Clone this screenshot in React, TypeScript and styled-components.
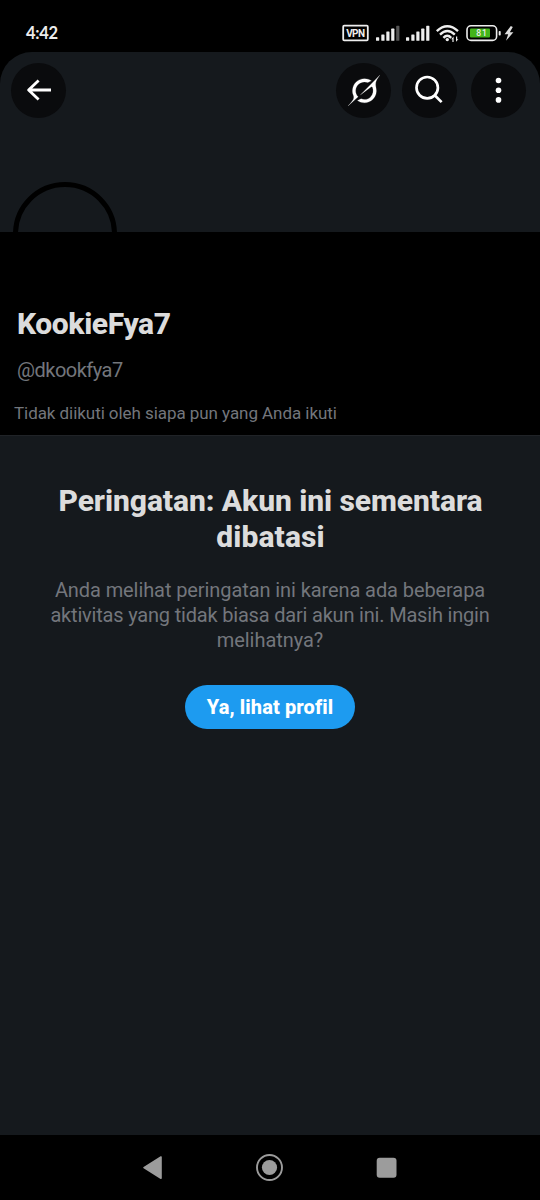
import React from "react";
import styled, { createGlobalStyle } from "styled-components";

const GlobalStyle = createGlobalStyle`
  * { box-sizing: border-box; }
  body { margin: 0; background: #000; }
`;

const Screen = styled.div`
  display: flex;
  flex-direction: column;
  width: 540px;
  height: 1200px;
  overflow: hidden;
  background: #000;
  font-family: Roboto, "Liberation Sans", sans-serif;
`;

const StatusBar = styled.header`
  display: flex;
  justify-content: space-between;
  height: 52px;
  padding-left: 26px;
`;

const Clock = styled.time`
  padding-top: 23px;
  font: 700 16.5px/21px Lato, sans-serif;
  letter-spacing: -0.3px;
  color: #ececec;
`;

const Banner = styled.section`
  display: flex;
  flex-direction: column;
  justify-content: space-between;
  height: 180px;
  overflow: hidden;
  border-radius: 32px 32px 0 0;
  background: #15191d;
`;

const Toolbar = styled.nav`
  display: flex;
  padding: 10.5px 14px 0 11px;
`;

const RoundButton = styled.button<{ $before?: string }>`
  display: flex;
  align-items: center;
  justify-content: center;
  width: 55px;
  height: 55px;
  padding: 0;
  border: 0;
  border-radius: 50%;
  margin-left: ${(p) => p.$before ?? "0"};
  background: #0a0b0d;
`;

const AvatarWindow = styled.div`
  height: 50px;
  padding-left: 13px;
  overflow: hidden;
`;

const Avatar = styled.div`
  width: 104px;
  height: 104px;
  border: 5px solid #000;
  border-radius: 50%;
`;

const Profile = styled.section`
  height: 204px;
  padding: 74px 14px 0;
  border-bottom: 1px solid #202327;
  white-space: nowrap;
`;

const Name = styled.h1`
  margin: 0 0 0 3px;
  font-size: 30px;
  line-height: 36px;
  font-weight: 800;
  letter-spacing: -0.4px;
  color: #dcdcdc;
`;

const Handle = styled.p`
  margin: 16px 0 0 3px;
  font-size: 20px;
  line-height: 25px;
  letter-spacing: -0.5px;
  color: #73767c;
`;

const Followers = styled.p`
  margin: 19px 0 0;
  font-size: 17px;
  line-height: 22px;
  letter-spacing: -0.06px;
  color: #73767c;
`;

const Warning = styled.main`
  display: flex;
  flex-direction: column;
  align-items: center;
  height: 699px;
  padding-top: 47px;
  background: #15191d;
  text-align: center;
  white-space: nowrap;
`;

const Title = styled.h2`
  margin: 0;
  padding-left: 1px;
  font-size: 30px;
  line-height: 36px;
  font-weight: 800;
  color: #dcdcdc;
`;

const Message = styled.p`
  margin: 23px 0 0;
  font-size: 20px;
  line-height: 25px;
  color: #73767c;
`;

const Line = styled.span<{ $track: number }>`
  display: block;
  letter-spacing: ${(p) => p.$track}px;
`;

const ViewButton = styled.button`
  width: 170px;
  height: 44px;
  margin-top: 31.5px;
  padding: 0;
  border: 0;
  border-radius: 22px;
  background: #1d9bf0;
  font: 800 20px/44px Roboto, sans-serif;
  letter-spacing: 0.1px;
  color: #fff;
`;

const SystemNav = styled.footer`
  display: flex;
  height: 65px;
`;

const StatusIcons = () => (
  <svg width="200" height="52" viewBox="340 0 200 52" fill="#eee">
    <rect x="343.2" y="25.7" width="24.6" height="14.6" rx="1" fill="none" stroke="#eee" strokeWidth="1.8" />
    <text x="346.2" y="36.7" fontSize="10" fontWeight="700" fontFamily="Roboto, sans-serif" textLength="18.8">VPN</text>
    {[376, 381.3, 386.3, 391.2].map((x, i) => (
      <rect key={x} x={x} y={[37.3, 34.5, 31.5, 28.6][i]} width="3.2" height={[3.5, 6.3, 9.3, 12.2][i]} rx="0.6" />
    ))}
    <rect x="396.2" y="25.8" width="3.2" height="15" rx="0.6" fill="#555" />
    {[406, 411.3, 416.3, 421.2, 426.2].map((x, i) => (
      <rect key={x} x={x} y={[37.3, 34.5, 31.5, 28.6, 25.8][i]} width="3.2" height={[3.5, 6.3, 9.3, 12.2, 15][i]} rx="0.6" />
    ))}
    <g fill="none" stroke="#eee" strokeWidth="2.4">
      <path d="M436.8 31.2Q447.3 21.5 458 31.2" />
      <path d="M440 34.6Q447.3 27.5 454.8 34.6" />
      <path d="M443.4 37.8Q447.3 33.8 451.2 37.8" />
    </g>
    <circle cx="447.3" cy="39.6" r="1.7" />
    <path d="M451.2 39.2l2.4-2.6v5.3h-1.2v-2.7zM458.4 39.2l-2.4 2.6v-5.2h1.2v2.6z" />
    <rect x="467" y="25.8" width="29.6" height="14.6" rx="4" fill="none" stroke="#eee" strokeWidth="1.6" />
    <rect x="470" y="28.4" width="20" height="9.2" rx="1" fill="#43b51b" />
    <text x="476.3" y="36" fontSize="8.6" fontWeight="500" fontFamily="Roboto, sans-serif" textLength="10.5">81</text>
    <rect x="498.7" y="31" width="2" height="4.5" rx="0.8" />
    <path d="M510.8 26l-6.2 8.2h3.6l-2.2 6.6 7.4-8.6h-3.6l3-5.2z" fill="#ddd" />
  </svg>
);

const BackIcon = () => (
  <svg width="55" height="55" viewBox="0 0 55 55" fill="none" stroke="#fff" strokeWidth="2.8">
    <path d="M40 27H17.6M27.6 17.4L17.6 27l10 9.6" strokeLinejoin="round" />
  </svg>
);

const GrokIcon = () => (
  <svg width="32" height="31" viewBox="0 0 33 32" fill="#fff" stroke="#fff" strokeWidth="0.2">
    <path d="M12.745 20.54l10.97-8.19c.539-.4 1.307-.244 1.564.38 1.349 3.288.746 7.241-1.938 9.955-2.683 2.714-6.417 3.31-9.83 1.954l-3.728 1.745c5.347 3.697 11.84 2.782 15.898-1.324 3.219-3.255 4.216-7.692 3.284-11.693l.008.009c-1.351-5.878.332-8.227 3.782-13.031L33 0l-4.54 4.59v-.014L12.743 20.544m-2.263 1.987c-3.837-3.707-3.175-9.446.1-12.755 2.42-2.449 6.388-3.448 9.852-1.979l3.72-1.737c-.67-.49-1.53-1.017-2.515-1.387-4.455-1.854-9.789-.931-13.41 2.728-3.483 3.523-4.579 8.94-2.697 13.561 1.405 3.454-.899 5.898-3.22 8.364C1.49 30.2.666 31.074 0 32l10.478-9.466" />
  </svg>
);

const SearchIcon = () => (
  <svg width="55" height="55" viewBox="0 0 55 55" fill="none" stroke="#fff" strokeWidth="2.7">
    <circle cx="25.2" cy="24.7" r="10.7" />
    <path d="M32.7 32.2L39.6 39.1" />
  </svg>
);

const MoreIcon = () => (
  <svg width="55" height="55" viewBox="0 0 55 55" fill="#fff">
    <circle cx="27.5" cy="17.5" r="2.8" />
    <circle cx="27.5" cy="27.2" r="2.8" />
    <circle cx="27.5" cy="36.9" r="2.8" />
  </svg>
);

const NavIcons = () => (
  <svg width="540" height="65" viewBox="0 1135 540 65" fill="#9c9c9c" stroke="#9c9c9c">
    <path d="M144 1167.6L161 1157v21.2z" strokeWidth="1.6" strokeLinejoin="round" />
    <circle cx="269.5" cy="1167.5" r="12.5" fill="none" strokeWidth="1.9" />
    <circle cx="269.5" cy="1167.5" r="7.6" stroke="none" />
    <rect x="376.7" y="1157.7" width="19.8" height="20" rx="3" stroke="none" />
  </svg>
);

export default function App() {
  return (
    <Screen>
      <GlobalStyle />
      <StatusBar>
        <Clock>4:42</Clock>
        <StatusIcons />
      </StatusBar>
      <Banner>
        <Toolbar>
          <RoundButton aria-label="Kembali"><BackIcon /></RoundButton>
          <RoundButton $before="auto" aria-label="Grok"><GrokIcon /></RoundButton>
          <RoundButton $before="11px" aria-label="Cari"><SearchIcon /></RoundButton>
          <RoundButton $before="14px" aria-label="Lainnya"><MoreIcon /></RoundButton>
        </Toolbar>
        <AvatarWindow><Avatar /></AvatarWindow>
      </Banner>
      <Profile>
        <Name>KookieFya7</Name>
        <Handle>@dkookfya7</Handle>
        <Followers>Tidak diikuti oleh siapa pun yang Anda ikuti</Followers>
      </Profile>
      <Warning>
        <Title>
          <Line $track={-0.07}>Peringatan: Akun ini sementara</Line>
          <Line $track={0.1}>dibatasi</Line>
        </Title>
        <Message>
          <Line $track={-0.09}>Anda melihat peringatan ini karena ada beberapa</Line>
          <Line $track={-0.19}>aktivitas yang tidak biasa dari akun ini. Masih ingin</Line>
          <Line $track={-0.05}>melihatnya?</Line>
        </Message>
        <ViewButton>Ya, lihat profil</ViewButton>
      </Warning>
      <SystemNav><NavIcons /></SystemNav>
    </Screen>
  );
}
